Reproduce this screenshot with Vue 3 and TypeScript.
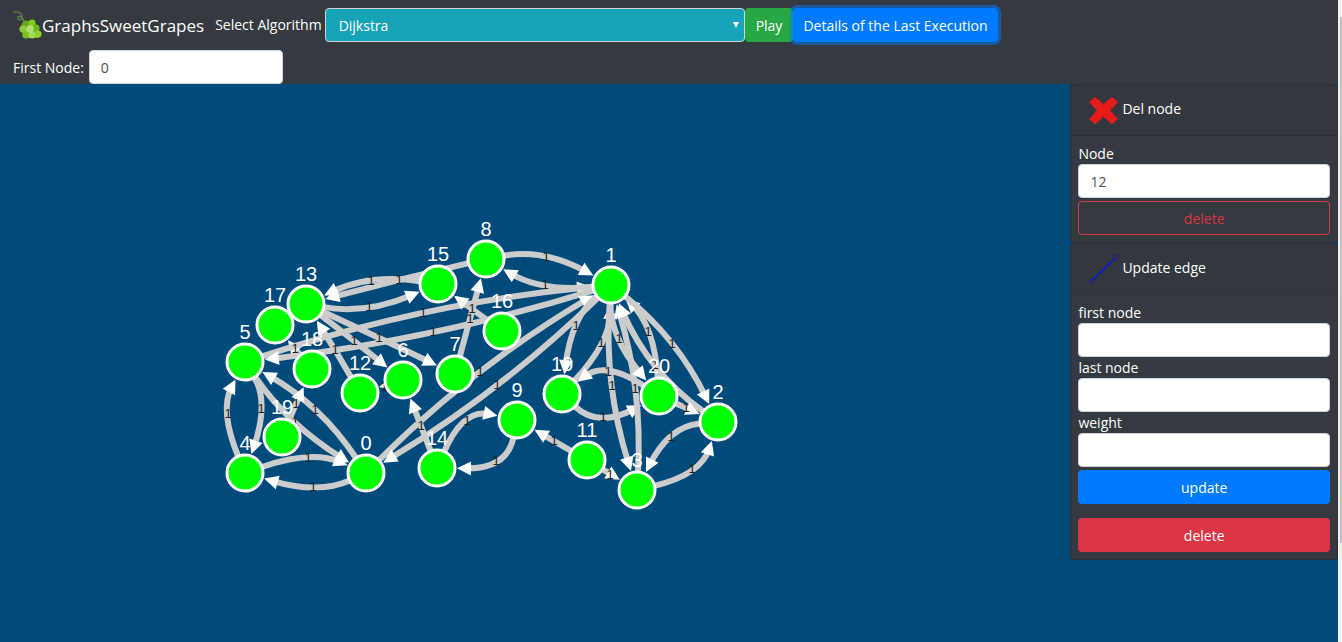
<script setup lang="ts">
import { ref } from 'vue'

type Point = [number, number]

interface EdgeShape {
  path: string
  arrow: string
  label: Point
}

const RADIUS = 18
const ARROW_LENGTH = 14
const ARROW_HALF_WIDTH = 7

const nodes: Point[] = [
  [366, 389], [611, 201], [718, 338], [637, 406], [245, 389], [245, 278], [403, 296],
  [455, 290], [486, 175], [517, 336], [562, 310], [587, 376], [360, 309], [306, 220],
  [437, 384], [438, 200], [502, 247], [275, 241], [312, 285], [282, 353], [659, 312],
]

// source, target, and the point the curve passes through halfway
const edges: [number, number, number, number][] = [
  [15, 13, 371, 197], [8, 13, 399, 196], [13, 15, 369, 223], [13, 6, 354, 257],
  [13, 7, 379, 254], [12, 13, 335, 266], [18, 17, 295, 265], [5, 1, 423, 229],
  [1, 5, 433, 248], [5, 4, 261, 325], [4, 5, 228, 330], [4, 0, 308, 374],
  [0, 4, 313, 403], [5, 0, 295, 338], [0, 5, 315, 326], [19, 18, 296, 320],
  [6, 12, 384, 303], [7, 8, 470, 235], [16, 15, 472, 225], [8, 1, 546, 173],
  [1, 8, 545, 201], [0, 1, 480, 288], [1, 0, 497, 301], [14, 6, 421, 342],
  [14, 9, 467, 337], [9, 14, 496, 377], [11, 9, 554, 357], [11, 3, 610, 391],
  [1, 10, 576, 242], [10, 1, 601, 259], [20, 10, 608, 288], [10, 20, 603, 333],
  [1, 3, 612, 302], [3, 1, 635, 305], [1, 20, 619, 255], [20, 1, 648, 248],
  [1, 2, 672, 260], [2, 1, 655, 281], [20, 2, 686, 324], [2, 3, 671, 353],
  [3, 2, 692, 385],
]

function toward(from: Point, to: Point, distance: number): Point {
  const length = Math.hypot(to[0] - from[0], to[1] - from[1]) || 1
  return [
    from[0] + ((to[0] - from[0]) / length) * distance,
    from[1] + ((to[1] - from[1]) / length) * distance,
  ]
}

function buildEdge([source, target, mx, my]: [number, number, number, number]): EdgeShape {
  const a = nodes[source]
  const b = nodes[target]
  const middle: Point = [mx, my]
  let control = middle
  let start = a
  let tip = b
  for (let i = 0; i < 4; i++) {
    start = toward(a, control, RADIUS)
    tip = toward(b, control, RADIUS + 2)
    control = [2 * mx - (start[0] + tip[0]) / 2, 2 * my - (start[1] + tip[1]) / 2]
  }
  const near = Math.hypot(b[0] - a[0], b[1] - a[1]) < 60
  const aim = near ? a : control
  tip = toward(b, aim, RADIUS + 2)
  const base = toward(b, aim, RADIUS + 2 + ARROW_LENGTH)
  const nx = ((base[1] - tip[1]) / ARROW_LENGTH) * ARROW_HALF_WIDTH
  const ny = ((base[0] - tip[0]) / ARROW_LENGTH) * ARROW_HALF_WIDTH
  const end = toward(b, aim, RADIUS + 10)
  return {
    path: near
      ? `M${a[0]} ${a[1]}L${end[0]} ${end[1]}`
      : `M${start[0]} ${start[1]}Q${control[0]} ${control[1]} ${end[0]} ${end[1]}`,
    arrow: `M${tip[0]} ${tip[1]}L${base[0] + nx} ${base[1] - ny}L${base[0] - nx} ${base[1] + ny}Z`,
    label: middle,
  }
}

const edgeShapes = edges.map(buildEdge)

const algorithm = ref('Dijkstra')
const firstNode = ref('0')
const nodeToDelete = ref('12')
const edgeFirst = ref('')
const edgeLast = ref('')
const edgeWeight = ref('')
</script>

<template>
  <div class="window">
    <div class="page">
      <header class="navbar">
        <div class="bar-row">
          <a class="brand" href="#">
            <svg class="brand-icon" viewBox="0 0 29 28" aria-hidden="true">
              <path d="M0 1C6 0 10 3 9 7C8 10 4 9 5 6C6 4 10 6 11 11" fill="none" stroke="#5f7f45" stroke-width="1.3" />
              <path d="M3 14Q7 12 12 15" fill="none" stroke="#5a3a26" stroke-width="1.5" />
              <path d="M10 11H21L28 24L25 27H12L7 18Z" fill="#74b81c" />
              <circle cx="13" cy="13" r="3.6" fill="#62ad12" />
              <circle cx="19" cy="12" r="3.6" fill="#82c91e" />
              <circle cx="10" cy="18" r="3.6" fill="#8ccb3c" />
              <circle cx="23" cy="17" r="3.6" fill="#6eb91a" />
              <circle cx="13" cy="24" r="3.6" fill="#7abf22" />
              <circle cx="25" cy="23" r="3.6" fill="#8ed02c" />
              <circle cx="19" cy="24" r="3.6" fill="#a6d85a" />
              <circle cx="17" cy="18" r="3.8" fill="#b5de7a" />
            </svg>
            <span>GraphsSweetGrapes</span>
          </a>
          <label class="select-label" for="algorithm">Select Algorithm</label>
          <div class="select-wrap">
            <select id="algorithm" v-model="algorithm" class="select">
              <option>Dijkstra</option>
            </select>
            <svg class="caret" viewBox="0 0 6 6" aria-hidden="true"><path d="M0 0H6L3 6Z" fill="#fff" /></svg>
          </div>
          <button class="btn play" type="button">Play</button>
          <button class="btn details" type="button">Details of the Last Execution</button>
        </div>
        <div class="bar-row second">
          <label for="first-node">First Node:</label>
          <input id="first-node" v-model="firstNode" class="field short" type="text" />
        </div>
      </header>

      <main class="content">
        <svg class="graph" role="img" aria-label="Graph">
          <g v-for="(edge, i) in edgeShapes" :key="'e' + i">
            <path class="edge" :d="edge.path" />
            <path class="arrow" :d="edge.arrow" />
          </g>
          <text v-for="(edge, i) in edgeShapes" :key="'w' + i" class="weight" :x="edge.label[0]" :y="edge.label[1] + 4">1</text>
          <g v-for="(node, i) in nodes" :key="'n' + i">
            <circle class="node" :cx="node[0]" :cy="node[1]" r="18" />
            <text class="node-label" :x="node[0]" :y="node[1] - 23">{{ i }}</text>
          </g>
        </svg>

        <aside class="sidebar">
          <section class="card">
            <h2 class="card-header">
              <svg class="card-icon" viewBox="0 0 29 29" aria-hidden="true">
                <path d="M6 1L14.5 8.500L23 1L28.500 6L21 14.500L28.500 23L23 28L14.500 20.500L6 28L.5 23L8 14.500L.5 6Z" fill="#e51c1a" stroke="#c92020" />
              </svg>
              <span>Del node</span>
            </h2>
            <form class="card-body" @submit.prevent>
              <label for="del-node">Node</label>
              <input id="del-node" v-model="nodeToDelete" class="field" type="text" />
              <button class="btn outline" type="button">delete</button>
            </form>
          </section>
          <section class="card">
            <h2 class="card-header">
              <svg class="card-icon" viewBox="0 0 29 29" aria-hidden="true">
                <path d="M3 26L26 3" stroke="#0a14e6" stroke-width="1.6" />
                <path d="M.5 24.500h4v4h-4zM24.500.5h4v4h-4z" fill="none" stroke="#1a1f8c" stroke-opacity=".8" />
              </svg>
              <span>Update edge</span>
            </h2>
            <form class="card-body" @submit.prevent>
              <label for="edge-first">first node</label>
              <input id="edge-first" v-model="edgeFirst" class="field" type="text" />
              <label for="edge-last">last node</label>
              <input id="edge-last" v-model="edgeLast" class="field" type="text" />
              <label for="edge-weight">weight</label>
              <input id="edge-weight" v-model="edgeWeight" class="field" type="text" />
              <button class="btn update" type="button">update</button>
              <button class="btn remove" type="button">delete</button>
            </form>
          </section>
        </aside>
      </main>
    </div>
    <div class="scrollbar"><div class="thumb"></div></div>
  </div>
</template>

<style>
body {
  margin: 0;
}
</style>

<style scoped>
.window {
  display: flex;
  min-height: 100vh;
  font: 14px/21px "Segoe UI", "Open Sans", "Noto Sans", sans-serif;
  color: #fff;
  background: #004a7c;
}

.window * {
  box-sizing: border-box;
}

.page {
  display: flex;
  flex: 1;
  flex-direction: column;
  min-width: 0;
}

.scrollbar {
  width: 4px;
  padding: 17px 0 0 2px;
  background: #f1f1f1;
}

.thumb {
  height: 82vh;
  background: #c1c1c1;
}

.navbar {
  padding: 8px 13px 0;
  background: #343a40;
}

.bar-row {
  display: flex;
  align-items: center;
}

.second {
  gap: 5px;
  margin-top: 8px;
}

.brand {
  display: flex;
  align-items: center;
  margin-right: 11px;
  color: #fff;
  font-size: 17px;
  text-decoration: none;
}

.brand-icon {
  width: 29px;
  height: 28px;
}

.select-label {
  margin-right: 3px;
  padding-bottom: 2px;
}

.select-wrap {
  position: relative;
  width: 420px;
}

.select {
  display: block;
  width: 100%;
  height: 34px;
  padding: 0 13px;
  border: 1px solid #ced4da;
  border-radius: 4px;
  background: #17a2b8;
  color: #fff;
  font: inherit;
  appearance: none;
}

.caret {
  position: absolute;
  top: 14px;
  right: 6px;
  width: 6px;
  height: 6px;
}

.btn {
  height: 34px;
  padding: 0 10px;
  border: 1px solid transparent;
  border-radius: 4px;
  color: #fff;
  font: inherit;
}

.play {
  background: #28a745;
}

.details {
  padding: 0 9px;
  background: #007bff;
  box-shadow: 0 0 0 3px rgba(0, 123, 255, 0.5);
}

.field {
  display: block;
  width: 100%;
  height: 34px;
  padding: 0 11px;
  border: 1px solid #ced4da;
  border-radius: 4px;
  background: #fff;
  color: #495057;
  font: inherit;
}

.short {
  width: 194px;
}

.content {
  display: flex;
  flex: 1;
  align-items: flex-start;
}

.graph {
  flex: 1;
  align-self: stretch;
  min-width: 0;
}

.edge {
  fill: none;
  stroke: #ccc;
  stroke-width: 6;
}

.arrow {
  fill: #fff;
}

.node {
  fill: #0f0;
  stroke: #fff;
  stroke-width: 3;
}

.weight,
.node-label {
  font-family: "Liberation Sans", Arial, sans-serif;
  text-anchor: middle;
}

.weight {
  fill: #222;
  font-size: 13px;
}

.node-label {
  fill: #fff;
  font-size: 20px;
}

.sidebar {
  width: 20%;
}

.card {
  border: 1px solid rgba(0, 0, 0, 0.125);
  border-radius: 4px;
  background: #343a40;
}

.card-header {
  display: flex;
  gap: 4px;
  align-items: center;
  height: 51px;
  margin: 0;
  padding: 0 18px;
  border-bottom: 1px solid rgba(0, 0, 0, 0.125);
  background: rgba(0, 0, 0, 0.03);
  font: inherit;
}

.card-header span {
  padding-bottom: 3px;
}

.card-icon {
  width: 29px;
  height: 29px;
}

.card-body {
  display: flex;
  flex-direction: column;
  padding: 7px;
}

.outline {
  margin-top: 3px;
  border-color: #dc3545;
  background: transparent;
  color: #dc3545;
}

.update {
  margin-top: 3px;
  background: #007bff;
}

.remove {
  margin-top: 14px;
  background: #dc3545;
}
</style>
